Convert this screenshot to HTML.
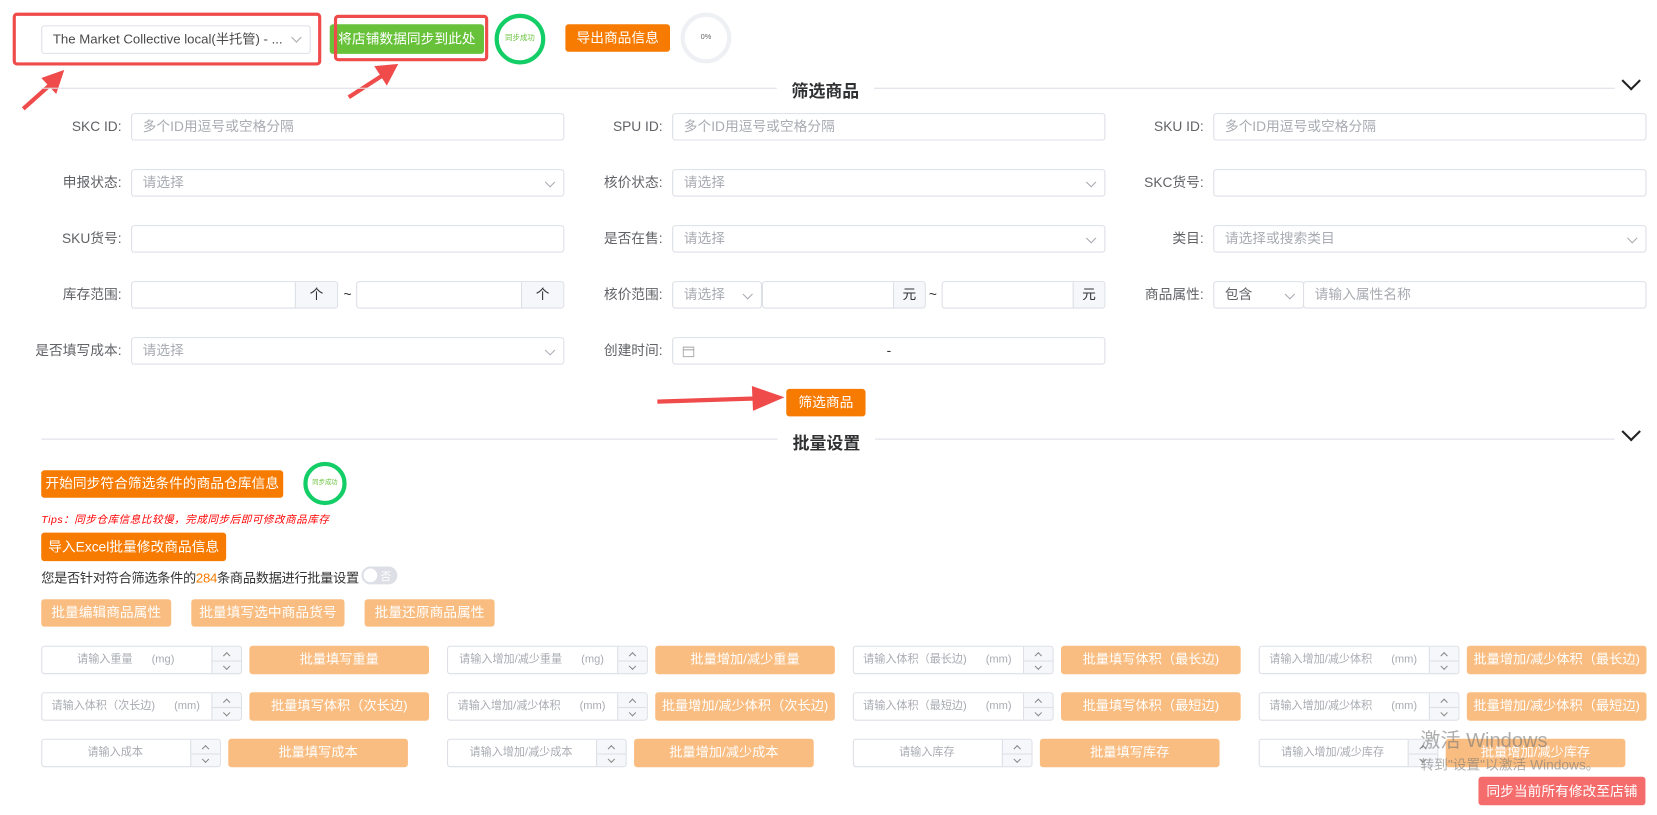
<!DOCTYPE html>
<html><head><meta charset="utf-8"><style>
*{box-sizing:border-box;margin:0;padding:0}
body{width:1657px;height:814px;background:#fff;font-family:"Liberation Sans","Noto Sans CJK SC",sans-serif;font-size:13px;color:#606266;position:relative;overflow:hidden}
#w{position:absolute;left:0;top:0;width:1568px;height:771px;transform:scale(1.0568);transform-origin:0 0}
.a{position:absolute}
.inp{position:absolute;height:26px;border:1px solid #dcdfe6;border-radius:3px;background:#fff;color:#a8abb2;font-size:13px;line-height:24px;padding-left:10px;white-space:nowrap;overflow:hidden}
.lbl{position:absolute;text-align:right;color:#606266;font-size:13px;line-height:26px}
.chev{position:absolute;right:9px;top:8px;width:7px;height:7px;border-right:1px solid #a8abb2;border-bottom:1px solid #a8abb2;transform:rotate(45deg)}
.btn{position:absolute;color:#fff;text-align:center;border-radius:3px;font-size:13px;white-space:nowrap;overflow:hidden}
.or{background:#f77b00}
.lo{background:#fabd81}
.sp{position:absolute;right:0;top:0;width:28px;height:100%;border-left:1px solid #dcdfe6;background:#f5f7fa}
.sp:after{content:"";position:absolute;left:0;right:0;top:50%;border-top:1px solid #dcdfe6}
.sp i{position:absolute;left:11px;width:5px;height:5px;border-left:1px solid #888;border-top:1px solid #888}
.div{position:absolute;left:39px;right:40px;height:1px;background:#dcdfe6}
.ttl{position:absolute;background:#fff;padding:0 14px;font-size:16px;font-weight:bold;color:#303133}
.bchev{position:absolute;width:13px;height:13px;border-right:2px solid #222;border-bottom:2px solid #222;transform:rotate(45deg);background:#fff}
</style></head><body><div id="w">

<div class="a" style="left:12px;top:12px;width:292px;height:50px;border:3px solid #f04b4b;border-radius:4px"></div>
<div class="inp" style="left:39px;top:24px;width:255px;height:27px;color:#4a4a4a;line-height:25px;padding-left:10px;padding-right:26px;font-size:12.5px">The Market Collective local(半托管) - ...<span class="chev" style="top:7px"></span></div>
<div class="btn" style="left:312px;top:23px;width:146px;height:28px;line-height:28px;background:#67c23a">将店铺数据同步到此处</div>
<div class="a" style="left:316px;top:14px;width:146px;height:44px;border:3px solid #f04b4b;border-radius:4px"></div>
<div class="a" style="left:468px;top:13px;width:48px;height:48px;border:4px solid #13ce66;border-radius:50%;font-size:7px;color:#67c23a;text-align:center;line-height:40px">同步成功</div>
<div class="btn or" style="left:535px;top:23px;width:99px;height:26px;line-height:26px">导出商品信息</div>
<div class="a" style="left:644px;top:12px;width:48px;height:48px;border:4px solid #eef0f4;border-radius:50%;font-size:7px;color:#666;text-align:center;line-height:40px">0%</div>

<svg class="a" style="left:0;top:0" width="1568" height="420">
<g fill="#f04b4b" stroke="#f04b4b" stroke-width="4">
<line x1="22" y1="103" x2="50" y2="78"/><polygon points="60,67 40,74 53,88" stroke-width="1"/>
<line x1="330" y1="92" x2="364" y2="70"/><polygon points="376,61 355,63 366,80" stroke-width="1"/>
<line x1="622" y1="380" x2="718" y2="377"/><polygon points="741,376 712,366 713,388" stroke-width="1"/>
</g></svg>

<div class="div" style="top:83px"></div>
<div class="ttl" style="left:735px;top:73px">筛选商品</div>
<div class="bchev" style="left:1537px;top:70px"></div>

<div class="lbl" style="left:0;width:115px;top:107px">SKC ID:</div><div class="inp" style="left:124px;top:107px;width:410px">多个ID用逗号或空格分隔</div>
<div class="lbl" style="left:500px;width:127px;top:107px">SPU ID:</div><div class="inp" style="left:636px;top:107px;width:410px">多个ID用逗号或空格分隔</div>
<div class="lbl" style="left:1000px;width:139px;top:107px">SKU ID:</div><div class="inp" style="left:1148px;top:107px;width:410px">多个ID用逗号或空格分隔</div>

<div class="lbl" style="left:0;width:115px;top:160px">申报状态:</div><div class="inp" style="left:124px;top:160px;width:410px">请选择<span class="chev"></span></div>
<div class="lbl" style="left:500px;width:127px;top:160px">核价状态:</div><div class="inp" style="left:636px;top:160px;width:410px">请选择<span class="chev"></span></div>
<div class="lbl" style="left:1000px;width:139px;top:160px">SKC货号:</div><div class="inp" style="left:1148px;top:160px;width:410px"></div>

<div class="lbl" style="left:0;width:115px;top:213px">SKU货号:</div><div class="inp" style="left:124px;top:213px;width:410px"></div>
<div class="lbl" style="left:500px;width:127px;top:213px">是否在售:</div><div class="inp" style="left:636px;top:213px;width:410px">请选择<span class="chev"></span></div>
<div class="lbl" style="left:1000px;width:139px;top:213px">类目:</div><div class="inp" style="left:1148px;top:213px;width:410px">请选择或搜索类目<span class="chev"></span></div>

<div class="lbl" style="left:0;width:115px;top:266px">库存范围:</div>
<div class="inp" style="left:124px;top:266px;width:196px"><span class="a" style="right:0;top:0;width:40px;height:24px;border-left:1px solid #dcdfe6;background:#f5f7fa;color:#333;text-align:center">个</span></div>
<div class="a" style="left:325px;top:271px;color:#333">~</div>
<div class="inp" style="left:337px;top:266px;width:197px"><span class="a" style="right:0;top:0;width:40px;height:24px;border-left:1px solid #dcdfe6;background:#f5f7fa;color:#333;text-align:center">个</span></div>
<div class="lbl" style="left:500px;width:127px;top:266px">核价范围:</div>
<div class="inp" style="left:636px;top:266px;width:85px">请选择<span class="chev"></span></div>
<div class="inp" style="left:721px;top:266px;width:155px"><span class="a" style="right:0;top:0;width:30px;height:24px;border-left:1px solid #dcdfe6;background:#f5f7fa;color:#333;text-align:center">元</span></div>
<div class="a" style="left:879px;top:271px;color:#333">~</div>
<div class="inp" style="left:891px;top:266px;width:155px"><span class="a" style="right:0;top:0;width:30px;height:24px;border-left:1px solid #dcdfe6;background:#f5f7fa;color:#333;text-align:center">元</span></div>
<div class="lbl" style="left:1000px;width:139px;top:266px">商品属性:</div>
<div class="inp" style="left:1148px;top:266px;width:86px;color:#606266">包含<span class="chev"></span></div>
<div class="inp" style="left:1233px;top:266px;width:325px">请输入属性名称</div>

<div class="lbl" style="left:0;width:115px;top:319px">是否填写成本:</div><div class="inp" style="left:124px;top:319px;width:410px">请选择<span class="chev"></span></div>
<div class="lbl" style="left:500px;width:127px;top:319px">创建时间:</div>
<div class="inp" style="left:636px;top:319px;width:410px;color:#333"><svg class="a" style="left:9px;top:7px" width="11" height="11"><rect x="0.5" y="1.5" width="10" height="9" fill="none" stroke="#aaa"/><line x1="0" y1="4" x2="11" y2="4" stroke="#aaa"/></svg><span class="a" style="left:202px">-</span></div>

<div class="btn or" style="left:744px;top:368px;width:75px;height:26px;line-height:26px">筛选商品</div>

<div class="div" style="top:415px"></div>
<div class="ttl" style="left:736px;top:406px">批量设置</div>
<div class="bchev" style="left:1537px;top:402px"></div>

<div class="btn or" style="left:39px;top:445px;width:229px;height:26px;line-height:26px">开始同步符合筛选条件的商品仓库信息</div>
<div class="a" style="left:287px;top:437px;width:41px;height:41px;border:4px solid #13ce66;border-radius:50%;font-size:6px;color:#67c23a;text-align:center;line-height:33px">同步成功</div>
<div class="a" style="left:39px;top:483px;font-size:10px;color:#f00;font-style:italic;letter-spacing:0.5px">Tips：同步仓库信息比较慢，完成同步后即可修改商品库存</div>
<div class="btn or" style="left:39px;top:504px;width:175px;height:27px;line-height:27px">导入Excel批量修改商品信息</div>
<div class="a" style="left:39px;top:536px;color:#333;font-size:12.5px;white-space:nowrap;letter-spacing:-0.3px">您是否针对符合筛选条件的<span style="color:#f77b00">284</span>条商品数据进行批量设置</div>
<div class="a" style="left:342px;top:536px;width:34px;height:17px;border-radius:9px;background:#dcdfe6"><span class="a" style="left:2px;top:2px;width:13px;height:13px;border-radius:50%;background:#fff"></span><span class="a" style="left:18px;top:1px;font-size:10px;color:#fff">否</span></div>

<div class="btn lo" style="left:39px;top:567px;width:123px;height:26px;line-height:26px">批量编辑商品属性</div>
<div class="btn lo" style="left:181px;top:567px;width:145px;height:26px;line-height:26px">批量填写选中商品货号</div>
<div class="btn lo" style="left:345px;top:567px;width:123px;height:26px;line-height:26px">批量还原商品属性</div>

<div id="bulk"></div>
<script>
var rows=[[611,[["请输入重量","(mg)","批量填写重量"],["请输入增加/减少重量","(mg)","批量增加/减少重量"],["请输入体积（最长边)","(mm)","批量填写体积（最长边)"],["请输入增加/减少体积","(mm)","批量增加/减少体积（最长边)"]],190,170],
[655,[["请输入体积（次长边)","(mm)","批量填写体积（次长边)"],["请输入增加/减少体积","(mm)","批量增加/减少体积（次长边)"],["请输入体积（最短边)","(mm)","批量填写体积（最短边)"],["请输入增加/减少体积","(mm)","批量增加/减少体积（最短边)"]],190,170],
[699,[["请输入成本","","批量填写成本"],["请输入增加/减少成本","","批量增加/减少成本"],["请输入库存","","批量填写库存"],["请输入增加/减少库存","","批量增加/减少库存"]],170,170]];
var xs=[39,423,807,1191],h="";
rows.forEach(function(r){r[1].forEach(function(c,i){var x=xs[i],w=r[2];
h+='<div class="inp" style="left:'+x+'px;top:'+r[0]+'px;width:'+w+'px;height:27px;font-size:10.5px;padding:0 30px 0 0;text-align:center">'+c[0]+(c[1]?'<span style="margin-left:18px">'+c[1]+'</span>':'')+'<span class="sp"><i style="top:6px;transform:rotate(45deg)"></i><i style="top:16px;transform:rotate(-135deg)"></i></span></div>';
h+='<div class="btn lo" style="left:'+(x+w+7)+'px;top:'+r[0]+'px;width:'+r[3]+'px;height:27px;line-height:27px;font-size:12.5px">'+c[2]+'</div>';});});
document.getElementById('bulk').innerHTML=h;
</script>

<div class="a" style="left:1344px;top:686px;font-size:19px;color:rgba(120,120,120,.6)">激活 Windows</div>
<div class="a" style="left:1344px;top:713px;font-size:13px;color:rgba(120,120,120,.6)">转到"设置"以激活 Windows。</div>
<div class="btn" style="left:1399px;top:735px;width:158px;height:27px;line-height:27px;background:#f56c6c">同步当前所有修改至店铺</div>
</div></body></html>
